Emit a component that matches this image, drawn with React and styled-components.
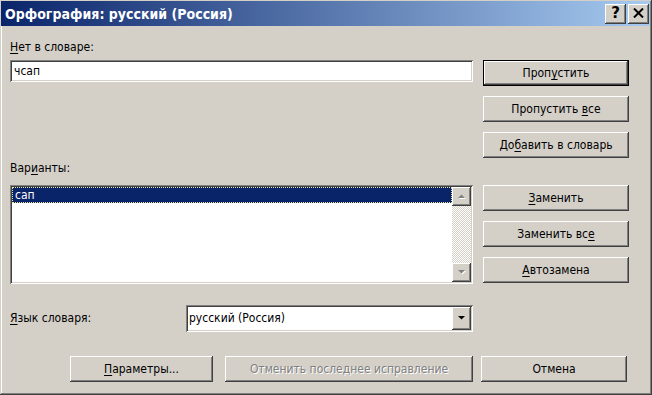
import styled, { createGlobalStyle } from "styled-components"

const GlobalStyle = createGlobalStyle`
    html, body {
        margin: 0;
        padding: 0;
    }
    body {
        background: #d4d0c8;
        font-family: "DejaVu Sans Condensed", "DejaVu Sans", Tahoma, sans-serif;
        font-size: 12px;
        color: #000;
    }
    * {
        box-sizing: border-box;
    }
`

const Window = styled.div`
    width: 652px;
    height: 395px;
    padding: 1px 2px 2px 1px;
    background: #d4d0c8;
    box-shadow: inset -1px -1px #404040, inset 1px 1px #d4d0c8,
        inset -2px -2px #808080, inset 2px 2px #fff;
    display: flex;
    flex-direction: column;
`

const TitleBar = styled.div`
    height: 25px;
    flex-shrink: 0;
    display: flex;
    align-items: center;
    padding: 0 1px 0 4px;
    background: linear-gradient(90deg, #0a246a, #a6caf0);
`

const TitleText = styled.div`
    flex: 1;
    color: #fff;
    font-weight: bold;
    font-size: 14px;
    white-space: nowrap;
`

const TitleButtons = styled.div`
    display: flex;
    gap: 2px;
`

const raised = `
    background: #d4d0c8;
    border: none;
    box-shadow: inset -1px -1px #404040, inset 1px 1px #fff,
        inset -2px -2px #808080, inset 2px 2px #d4d0c8;
`

const sunken = `
    background: #fff;
    box-shadow: inset 1px 1px #808080, inset -1px -1px #fff,
        inset 2px 2px #404040, inset -2px -2px #d4d0c8;
`

const CaptionButton = styled.div`
    ${raised}
    width: 21px;
    height: 20px;
    display: flex;
    align-items: center;
    justify-content: center;
    font-family: "DejaVu Sans", sans-serif;
    font-weight: bold;
    font-size: 15px;
    line-height: 1;
    padding-bottom: 1px;
`

const Content = styled.div`
    display: grid;
    grid-template-columns: 463px 146px;
    grid-template-rows: 34px 98px 27px 99px 48px auto;
    grid-template-areas:
        "l1 ."
        "in b1"
        "l2 ."
        "ls b2"
        "lg ."
        "ft ft";
    column-gap: 10px;
    padding-left: 9px;
`

const Label = styled.div`
    grid-area: ${(p) => p.$area};
    align-self: end;
    line-height: 15px;
    margin-bottom: ${(p) => p.$gap}px;
    white-space: nowrap;
`

const U = styled.span`
    text-decoration: underline;
    text-underline-offset: 2px;
`

const TextField = styled.div`
    grid-area: in;
    ${sunken}
    height: 22px;
    padding: 3px 4px 0;
    line-height: 16px;
`

const ButtonColumn = styled.div`
    grid-area: ${(p) => p.$area};
    display: flex;
    flex-direction: column;
    gap: 10px;
`

const Button = styled.div`
    ${raised}
    ${(p) =>
        p.$default &&
        `box-shadow: inset 0 0 0 1px #000, inset -2px -2px #404040, inset 2px 2px #fff,
        inset -3px -3px #808080, inset 3px 3px #d4d0c8;`}
    width: ${(p) => p.$width || 146}px;
    height: 26px;
    flex-shrink: 0;
    display: flex;
    align-items: center;
    justify-content: center;
    white-space: nowrap;
    color: ${(p) => (p.$disabled ? "#808080" : "#000")};
    text-shadow: ${(p) => (p.$disabled ? "1px 1px 0 #fff" : "none")};
`

const ListBox = styled.div`
    grid-area: ls;
    ${sunken}
    padding: 2px;
    display: flex;
`

const ListItems = styled.div`
    flex: 1;
`

const SelectedItem = styled.div`
    height: 16px;
    padding-left: 2px;
    line-height: 14px;
    background: #0a246a;
    color: #fff;
    border: 1px dotted #f0e39a;
`

const ScrollBar = styled.div`
    width: 19px;
    display: flex;
    flex-direction: column;
    justify-content: space-between;
    background: repeating-conic-gradient(#fff 0 25%, #d4d0c8 0 50%) 0 0 / 2px 2px;
`

const ArrowButton = styled.div`
    ${raised}
    width: 19px;
    height: 19px;
    display: flex;
    align-items: center;
    justify-content: center;
`

const LanguageRow = styled.div`
    grid-area: lg;
    align-self: end;
    display: flex;
    align-items: center;
`

const LanguageLabel = styled.div`
    width: 176px;
    line-height: 15px;
`

const Combo = styled.div`
    ${sunken}
    flex: 1;
    height: 27px;
    padding: 2px;
    display: flex;
`

const ComboValue = styled.div`
    flex: 1;
    padding-left: 1px;
    line-height: 23px;
`

const DropButton = styled.div`
    ${raised}
    width: 19px;
    display: flex;
    align-items: center;
    justify-content: center;
`

const Footer = styled.div`
    grid-area: ft;
    display: flex;
    padding-left: 60px;
    margin-top: 24px;
`

const Gap = styled.div`
    width: ${(p) => p.$size}px;
    flex-shrink: 0;
`

function Arrow({ up, color = "#808080", shadow }) {
    const pts = up ? "1,5 8,5 4.5,1.5" : "1,1 8,1 4.5,4.5"
    return (
        <svg width="9" height="7" viewBox="0 0 9 7">
            {shadow && (
                <polygon points={pts} transform="translate(1,1)" fill="#fff" />
            )}
            <polygon points={pts} fill={color} />
        </svg>
    )
}

export default function App() {
    return (
        <>
            <GlobalStyle />
            <Window>
                <TitleBar>
                    <TitleText>Орфография: русский (Россия)</TitleText>
                    <TitleButtons>
                        <CaptionButton>?</CaptionButton>
                        <CaptionButton>
                            <svg width="11" height="10" viewBox="0 0 11 10">
                                <path d="M1 0.5 L10 9.5 M10 0.5 L1 9.5" stroke="#000" strokeWidth="2" />
                            </svg>
                        </CaptionButton>
                    </TitleButtons>
                </TitleBar>
                <Content>
                    <Label $area="l1" $gap={5}>
                        <U>Н</U>ет в словаре:
                    </Label>
                    <TextField>чсап</TextField>
                    <ButtonColumn $area="b1">
                        <Button $default>
                            <span>
                                Проп<U>у</U>стить
                            </span>
                        </Button>
                        <Button>
                            <span>
                                Пропустить <U>в</U>се
                            </span>
                        </Button>
                        <Button>
                            <span>
                                До<U>б</U>авить в словарь
                            </span>
                        </Button>
                    </ButtonColumn>
                    <Label $area="l2" $gap={9}>
                        Вар<U>и</U>анты:
                    </Label>
                    <ListBox>
                        <ListItems>
                            <SelectedItem>сап</SelectedItem>
                        </ListItems>
                        <ScrollBar>
                            <ArrowButton>
                                <Arrow up shadow />
                            </ArrowButton>
                            <ArrowButton>
                                <Arrow shadow />
                            </ArrowButton>
                        </ScrollBar>
                    </ListBox>
                    <ButtonColumn $area="b2">
                        <Button>
                            <span>
                                <U>З</U>аменить
                            </span>
                        </Button>
                        <Button>
                            <span>
                                Заменить вс<U>е</U>
                            </span>
                        </Button>
                        <Button>
                            <span>
                                <U>А</U>втозамена
                            </span>
                        </Button>
                    </ButtonColumn>
                    <LanguageRow>
                        <LanguageLabel>
                            <U>Я</U>зык словаря:
                        </LanguageLabel>
                        <Combo>
                            <ComboValue>русский (Россия)</ComboValue>
                            <DropButton>
                                <Arrow color="#000" />
                            </DropButton>
                        </Combo>
                    </LanguageRow>
                    <Footer>
                        <Button $width={143}>
                            <span>
                                <U>П</U>араметры...
                            </span>
                        </Button>
                        <Gap $size={12} />
                        <Button $width={248} $disabled>
                            Отменить последнее исправление
                        </Button>
                        <Gap $size={8} />
                        <Button>Отмена</Button>
                    </Footer>
                </Content>
            </Window>
        </>
    )
}
